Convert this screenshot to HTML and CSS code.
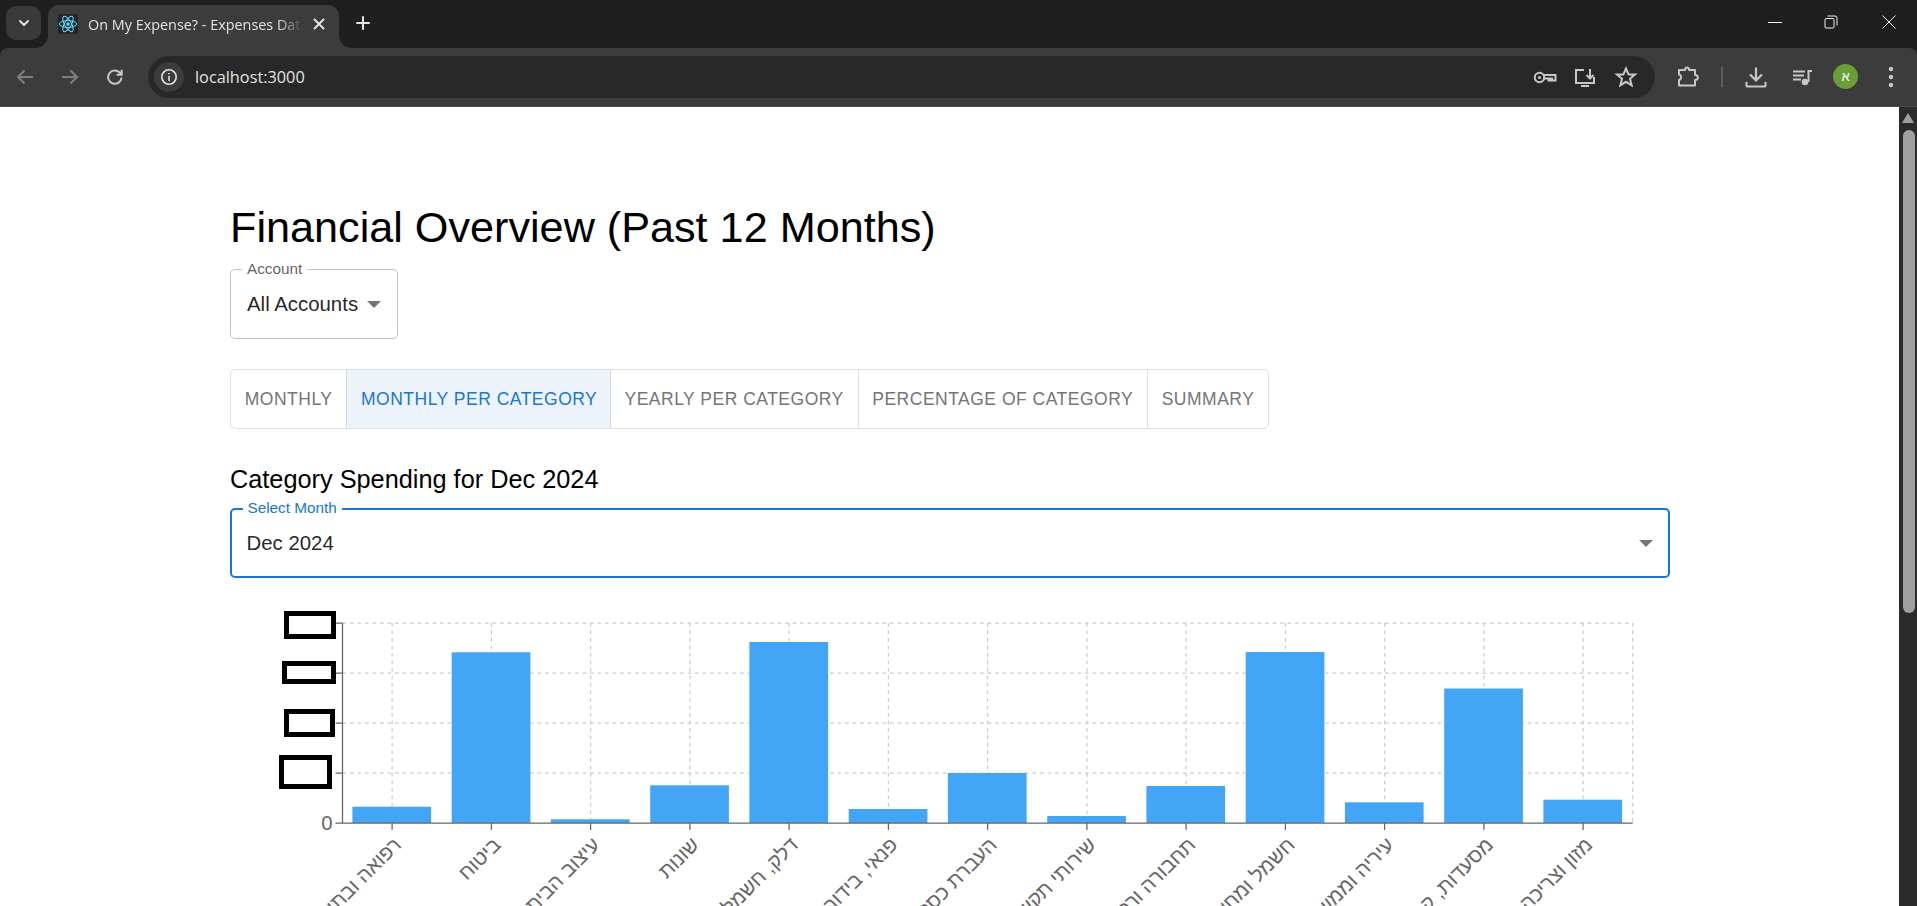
FILE: index.html
```html
<!DOCTYPE html>
<html lang="en">
<head>
<meta charset="utf-8">
<title>On My Expense? - Expenses Data</title>
<link rel="stylesheet" href="styles.css">
</head>
<body>
<header class="browser">
  <div class="strip">
    <button class="tab-search"><svg width="16" height="16" viewBox="0 0 16 16"><path class="ic-w" d="M4 6l4 4 4-4"/></svg></button>
    <div class="tab">
      <span class="favicon"><svg width="20" height="20" viewBox="0 0 20 20"><g class="atom"><ellipse cx="10" cy="10" rx="8.6" ry="3.4"/><ellipse cx="10" cy="10" rx="8.6" ry="3.4" transform="rotate(60 10 10)"/><ellipse cx="10" cy="10" rx="8.6" ry="3.4" transform="rotate(120 10 10)"/></g><circle class="atom-dot" cx="10" cy="10" r="1.7"/></svg></span>
      <span class="tab-title">On My Expense? - Expenses Data</span>
      <svg class="tab-close" width="12" height="12" viewBox="0 0 12 12"><path class="ic-w" d="M1.5 1.5l9 9M10.5 1.5l-9 9"/></svg>
    </div>
    <svg class="new-tab" width="16" height="16" viewBox="0 0 16 16"><path class="ic-w" d="M8 2v12M2 8h12"/></svg>
    <div class="win-controls">
      <svg width="14" height="14" viewBox="0 0 14 14"><path class="ic-thin" d="M0 7.5h14"/></svg>
      <svg width="14" height="14" viewBox="0 0 14 14"><path class="ic-thin" d="M1 4.5a1 1 0 0 1 1-1h7a1 1 0 0 1 1 1v7.5a1 1 0 0 1-1 1H2a1 1 0 0 1-1-1zM3.5 1H11a2 2 0 0 1 2 2v7.5"/></svg>
      <svg class="win-close" width="14" height="14" viewBox="0 0 14 14"><path class="ic-thin" d="M.5.5l13 13M13.5.5l-13 13"/></svg>
    </div>
  </div>
  <div class="toolbar">
    <span class="tb-btn"><svg width="20" height="20" viewBox="0 0 20 20"><path class="ic-dim" d="M18 10H3M9.500 3.500L3 10l6.500 6.500"/></svg></span>
    <span class="tb-btn"><svg width="20" height="20" viewBox="0 0 20 20"><path class="ic-dim" d="M2 10h15M10.500 3.500L17 10l-6.500 6.500"/></svg></span>
    <span class="tb-btn"><svg width="20" height="20" viewBox="0 0 20 20"><path class="ic-lt" d="M16.500 10.500a6.700 6.700 0 1 1-2-5.200L16.500 7.500M16.700 2.700v5h-5"/></svg></span>
    <div class="omnibox">
      <span class="info"><svg width="18" height="18" viewBox="0 0 18 18"><circle class="ic-info" cx="9" cy="9" r="7.200"/><path class="ic-info" d="M9 8v5M9 5v1.300"/></svg></span>
      <span class="url">localhost:3000</span>
      <span class="omni-icons">
        <span class="omni-btn"><svg width="24" height="24" viewBox="0 0 24 24"><circle class="ic-lt" cx="6.500" cy="12.500" r="4.700"/><circle class="ic-fill" cx="6.500" cy="12.500" r="1.600"/><path class="ic-lt" d="M11 10h11.500v5.500H19v-2h-2v2h-1.500v-2H11"/></svg></span>
        <span class="omni-btn"><svg width="24" height="24" viewBox="0 0 24 24"><path class="ic-lt" d="M11 5H3v13h18v-6M8 21h8M17 4v9M13.500 10l3.500 3.500 3.500-3.500"/></svg></span>
        <span class="omni-btn nudge"><svg width="24" height="24" viewBox="0 0 24 24"><path class="ic-lt" d="M12 3.500l2.600 6h6.400l-5 4.300 1.600 6.500-5.600-3.500-5.600 3.500 1.600-6.500-5-4.300h6.400z"/></svg></span>
      </span>
    </div>
    <div class="tb-right">
      <span class="tb-btn"><svg width="24" height="24" viewBox="0 0 24 24"><path class="ic-lt ic-round" d="M3 5h6a2 2.500 0 0 1 4 0h6v5a2.500 2.200 0 0 1 0 5v5.500H3V15a2.500 2.800 0 0 0 0-5.500z"/></svg></span>
      <span class="tb-sep"></span>
      <span class="tb-btn"><svg width="24" height="24" viewBox="0 0 24 24"><path class="ic-lt2" d="M12 2.500V15M6 9.500l6 6 6-6M2.500 17v3a1.500 1.500 0 0 0 1.500 1.500h16a1.500 1.500 0 0 0 1.500-1.500v-3"/></svg></span>
      <span class="tb-btn"><svg width="24" height="24" viewBox="0 0 24 24"><path class="ic-lt" d="M4 6.500h12M4 10.500h11M4 14.500h8M23 6h-3.500v11"/><circle class="ic-fill" cx="16" cy="17" r="3.300"/></svg></span>
      <span class="tb-btn"><span class="avatar">א</span></span>
      <span class="tb-btn"><svg width="6" height="22" viewBox="0 0 6 22"><circle class="ic-fill" cx="3" cy="3" r="2.200"/><circle class="ic-fill" cx="3" cy="11" r="2.200"/><circle class="ic-fill" cx="3" cy="19" r="2.200"/></svg></span>
    </div>
  </div>
</header>

<div class="viewport">
  <main class="page">
    <h1 class="title">Financial Overview (Past 12 Months)</h1>
    <div class="select account">
      <span class="select-label">Account</span>
      <span class="select-value">All Accounts</span>
      <span class="caret"></span>
    </div>
    <nav class="tabs">
      <span class="tabs-item">MONTHLY</span>
      <span class="tabs-item is-active">MONTHLY PER CATEGORY</span>
      <span class="tabs-item">YEARLY PER CATEGORY</span>
      <span class="tabs-item">PERCENTAGE OF CATEGORY</span>
      <span class="tabs-item">SUMMARY</span>
    </nav>
    <h2 class="subtitle">Category Spending for Dec 2024</h2>
    <div class="select month">
      <span class="select-label">Select Month</span>
      <span class="select-value">Dec 2024</span>
      <span class="caret"></span>
    </div>
    <svg class="chart" width="1440" height="420" viewBox="0 0 1440 420">
      <g class="grid">
        <path d="M112.500 46H1402.700M112.500 96H1402.700M112.500 146H1402.700M112.500 196H1402.700"/>
        <path d="M162.100 46V246M261.400 46V246M360.600 46V246M459.900 46V246M559.100 46V246M658.400 46V246M757.600 46V246M856.900 46V246M956.100 46V246M1055.400 46V246M1154.600 46V246M1253.900 46V246M1353.100 46V246M1402.700 46V246"/>
      </g>
      <g class="bars">
        <rect x="122.400" y="229.700" width="78.700" height="16.300"/>
        <rect x="221.700" y="75.300" width="78.700" height="170.700"/>
        <rect x="320.900" y="242.300" width="78.700" height="3.700"/>
        <rect x="420.200" y="208.300" width="78.700" height="37.700"/>
        <rect x="519.400" y="65" width="78.700" height="181"/>
        <rect x="618.700" y="232" width="78.700" height="14"/>
        <rect x="717.900" y="196" width="78.700" height="50"/>
        <rect x="817.200" y="239" width="78.700" height="7"/>
        <rect x="916.400" y="209" width="78.700" height="37"/>
        <rect x="1015.700" y="75" width="78.700" height="171"/>
        <rect x="1114.900" y="225.300" width="78.700" height="20.700"/>
        <rect x="1214.200" y="111.500" width="78.700" height="134.500"/>
        <rect x="1313.400" y="222.700" width="78.700" height="23.300"/>
      </g>
      <path class="axis" d="M112.500 46V246H1402.700"/>
      <path class="axis" d="M105.500 46h7M105.500 96h7M105.500 146h7M105.500 196h7M105.500 246h7"/>
      <path class="axis" d="M162.100 246v7M261.400 246v7M360.600 246v7M459.900 246v7M559.100 246v7M658.400 246v7M757.600 246v7M856.900 246v7M956.100 246v7M1055.400 246v7M1154.600 246v7M1253.900 246v7M1353.100 246v7"/>
      <g class="tofu">
        <rect x="56.500" y="36.500" width="47" height="23"/>
        <rect x="54.500" y="86.500" width="49" height="18"/>
        <rect x="56.500" y="134.500" width="46" height="23"/>
        <rect x="51.500" y="180.500" width="48" height="29"/>
      </g>
      <text class="tick" x="102.500" y="253" text-anchor="end">0</text>
      <g class="tick">
        <text x="172.500" y="269" text-anchor="end" transform="rotate(-45 172.500 269)">רפואה ובתי מרקחת</text>
        <text x="271.900" y="269" text-anchor="end" transform="rotate(-45 271.900 269)">ביטוח</text>
        <text x="371.100" y="269" text-anchor="end" transform="rotate(-45 371.100 269)">עיצוב הבית</text>
        <text x="470.400" y="269" text-anchor="end" transform="rotate(-45 470.400 269)">שונות</text>
        <text x="569.600" y="269" text-anchor="end" transform="rotate(-45 569.600 269)">דלק, חשמל וגז</text>
        <text x="668.900" y="269" text-anchor="end" transform="rotate(-45 668.900 269)">פנאי, בידור וספורט</text>
        <text x="768.100" y="269" text-anchor="end" transform="rotate(-45 768.100 269)">העברת כספים</text>
        <text x="867.400" y="269" text-anchor="end" transform="rotate(-45 867.400 269)">שירותי תקשורת</text>
        <text x="966.600" y="269" text-anchor="end" transform="rotate(-45 966.600 269)">תחבורה ורכבים</text>
        <text x="1065.900" y="269" text-anchor="end" transform="rotate(-45 1065.900 269)">חשמל ומחשבים</text>
        <text x="1165.100" y="269" text-anchor="end" transform="rotate(-45 1165.100 269)">עיריה וממשלה</text>
        <text x="1264.400" y="269" text-anchor="end" transform="rotate(-45 1264.400 269)">מסעדות, קפה וברים</text>
        <text x="1363.600" y="269" text-anchor="end" transform="rotate(-45 1363.600 269)">מזון וצריכה</text>
      </g>
    </svg>
  </main>
  <aside class="scrollbar">
    <span class="sb-up"></span>
    <span class="sb-thumb"></span>
  </aside>
</div>
</body>
</html>
```
FILE: styles.css
```css
* { box-sizing: border-box; }
html, body { margin: 0; height: 100%; overflow: hidden; }
body {
  display: flex;
  flex-direction: column;
  height: 906px;
  background: #fff;
  font-family: "Liberation Sans", Arial, sans-serif;
}
button { border: 0; padding: 0; font: inherit; }
svg { display: block; fill: none; }

/* browser chrome */
.browser { background: #1f1f1f; flex: none; }
.strip { display: flex; height: 48px; align-items: flex-end; position: relative; }
.tab-search {
  width: 35px; height: 34px; margin: 0 7px 8px 6px;
  background: #3a3a3a; border-radius: 10px;
  display: flex; align-items: center; justify-content: center;
}
.tab {
  position: relative;
  width: 291px; height: 43px; padding: 0 14px 5px 10px;
  background: #3c3c3c; border-radius: 11px 11px 0 0;
  display: flex; align-items: center; gap: 10px;
}
.tab::before, .tab::after {
  content: ""; position: absolute; bottom: 0; width: 12px; height: 12px;
}
.tab::before { left: -12px; background: radial-gradient(circle at 0 0, transparent 11.5px, #3c3c3c 12px); }
.tab::after { right: -12px; background: radial-gradient(circle at 100% 0, transparent 11.5px, #3c3c3c 12px); }
.favicon { width: 20px; height: 20px; background: #23282d; flex: none; border-radius: 1px; }
.atom { stroke: #61dafb; stroke-width: 1; }
.atom-dot { fill: #61dafb; }
.tab-title {
  flex: 1; min-width: 0; overflow: hidden; white-space: nowrap;
  font: 14.400px "Open Sans", sans-serif; color: #e3e3e3;
  -webkit-mask-image: linear-gradient(to right, #000 88%, transparent 100%);
  mask-image: linear-gradient(to right, #000 88%, transparent 100%);
}
.tab-close { flex: none; }
.new-tab { margin: 0 0 17px 16px; }
.win-controls {
  margin-left: auto; display: flex; gap: 42px; padding: 0 21px 19px 0;
}
.win-close { margin-left: 2px; }
.ic-w { stroke: #e3e3e3; stroke-width: 2; stroke-linecap: round; stroke-linejoin: round; }
.ic-info { stroke: #e3e3e3; stroke-width: 1.600; }
.ic-thin { stroke: #f0f0f0; stroke-width: 1; }
.ic-dim { stroke: #7f7f7f; stroke-width: 2; }
.ic-lt { stroke: #c7c7c7; stroke-width: 2; }
.ic-round { stroke-linejoin: round; }
.ic-lt2 { stroke: #c7c7c7; stroke-width: 2.2; }
.ic-fill { fill: #c7c7c7; }

.toolbar {
  height: 59px; padding: 0 4px 1px 2px;
  background: #3c3c3c; border-radius: 8px 8px 0 0;
  border-bottom: 1px solid #4a4a4a;
  display: flex; align-items: center;
}
.tb-btn {
  width: 45px; height: 42px; flex: none; position: relative;
  display: flex; align-items: center; justify-content: center;
}
.omnibox {
  flex: 1; height: 42px; margin: 0 10px 0 11px; padding: 0 10px 0 6px;
  background: #282828; border-radius: 21px;
  display: flex; align-items: center;
}
.info {
  width: 30px; height: 30px; border-radius: 50%; background: #3c3c3c;
  display: flex; align-items: center; justify-content: center;
}
.url { margin-left: 11px; font: 16.300px "Open Sans", sans-serif; color: #e3e3e3; }
.omni-icons { margin-left: auto; display: flex; }
.omni-btn { width: 40px; display: flex; justify-content: center; }
.omni-btn.nudge { padding-left: 2px; }
.tb-right { display: flex; align-items: center; }
.tb-sep { width: 23px; height: 20px; position: relative; }
.tb-sep::after { content: ""; position: absolute; left: 11px; top: 0; width: 2px; height: 20px; background: #5e5e5e; }
.avatar {
  width: 25px; height: 25px; border-radius: 50%; background: #6a9f35;
  color: #fff; font: 13px "Liberation Sans", sans-serif;
  display: flex; align-items: center; justify-content: center;
}

/* page */
.viewport { flex: 1; min-height: 0; display: flex; }
.page { flex: 1; min-width: 0; overflow: hidden; padding: 93px 229px 0 230px; }
.title { margin: 0 0 15px; font-size: 43.200px; font-weight: 400; line-height: 54px; color: #000; }
.select {
  position: relative; height: 70px; padding: 1px 16px 0;
  border: 1.25px solid #c4c4c4; border-radius: 5px;
  display: flex; align-items: center;
  font-size: 20.400px; color: rgba(0,0,0,.87);
}
.select-label {
  position: absolute; left: 11px; top: -10px; padding: 0 5px;
  background: #fff; font-size: 15.300px; line-height: 17px; color: #666;
}
.caret {
  position: absolute; right: 16px; top: 31px;
  border-left: 7px solid transparent; border-right: 7px solid transparent;
  border-top: 7px solid #757575;
}
.account { width: 168px; margin-bottom: 30px; }
.month { margin-top: 14px; border: 2.5px solid #1976d2; padding: 1px 14.500px 0; }
.month .select-label { color: #1976d2; left: 10.500px; top: -11px; }
.month .caret { top: 29.500px; right: 15px; }
.tabs {
  display: inline-flex; height: 60px; vertical-align: top;
  border: 1.25px solid #e0e0e0; border-radius: 5px;
}
.tabs-item {
  display: flex; align-items: center; padding: 0 13.750px;
  font-size: 17.500px; letter-spacing: .5px; color: #757575;
  border-left: 1.25px solid #e0e0e0;
}
.tabs-item:first-child { border-left: 0; }
.is-active { background: #edf3fb; color: #1976d2; padding-right: 12.500px; border-right: 1.25px solid #d0d7e0; border-left-color: #d0d7e0; }
.is-active + .tabs-item { border-left: 0; }
.subtitle { margin: 35px 0 0; font-size: 25.300px; font-weight: 400; line-height: 30px; color: #000; }
.chart { margin-top: -1px; font-family: "Liberation Sans", sans-serif; }
.grid path { stroke: #ccc; stroke-width: 1.25; stroke-dasharray: 3.750 3.750; }
.bars rect { fill: #42a5f5; }
.axis { stroke: #666; stroke-width: 1.25; }
.tofu rect { stroke: #000; stroke-width: 5; fill: none; }
.tick { fill: #666; font-size: 20.400px; }

/* scrollbar */
.scrollbar { width: 18px; flex: none; background: #2b2b2b; position: relative; }
.sb-up {
  position: absolute; left: 3px; top: 6px;
  border-left: 6.500px solid transparent; border-right: 6.500px solid transparent;
  border-bottom: 10px solid #a0a0a0;
}
.sb-thumb {
  position: absolute; left: 4px; top: 23px; width: 12px; height: 483px;
  background: #a0a0a0; border-radius: 6px;
}
```
